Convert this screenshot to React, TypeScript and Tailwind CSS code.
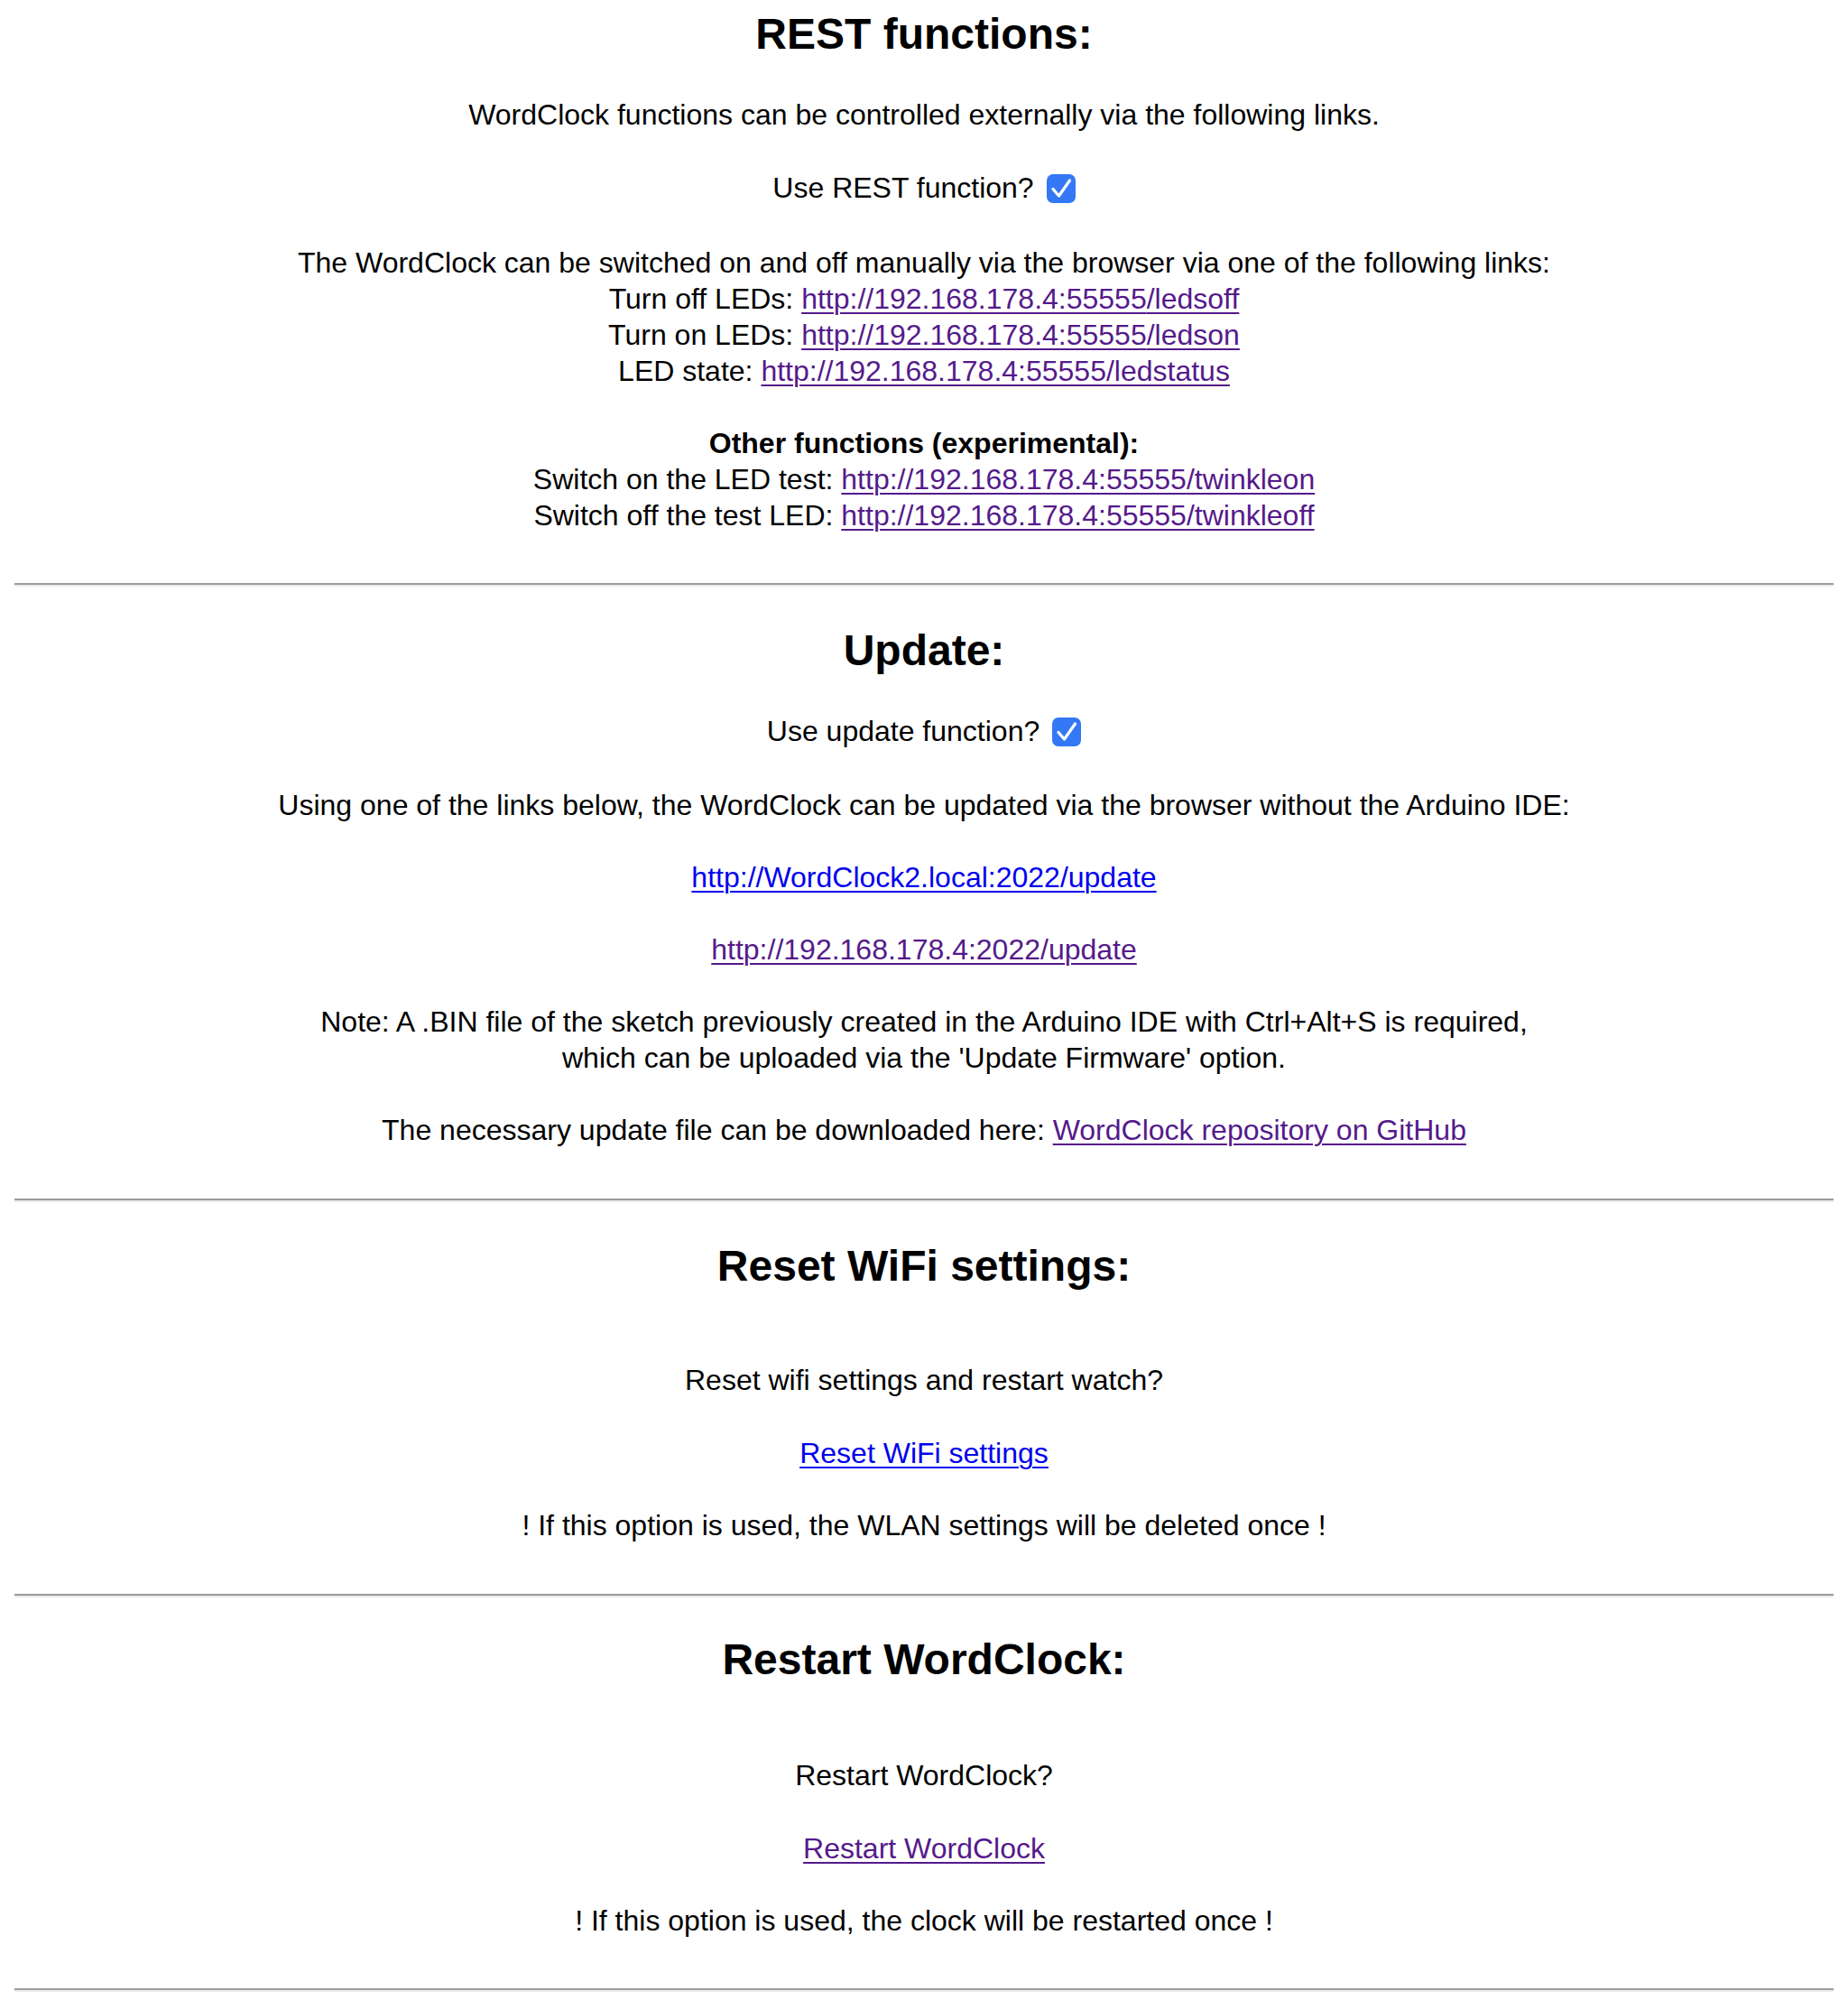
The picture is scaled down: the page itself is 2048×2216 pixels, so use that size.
const FONT = "font-['Liberation_Sans',Arial,Helvetica,sans-serif]";

function Line({ children, className = '' }: { children: React.ReactNode; className?: string }) {
  return <div className={`h-[40px] leading-[40px] whitespace-nowrap ${className}`}>{children}</div>;
}

function Heading({ children, className = '' }: { children: React.ReactNode; className?: string }) {
  return (
    <h2 className={`h-[56px] leading-[56px] text-[48px] font-bold whitespace-nowrap ${className}`}>{children}</h2>
  );
}

function Link({ href, fresh = false, children }: { href: string; fresh?: boolean; children: React.ReactNode }) {
  return (
    <a
      href={href}
      className={`underline decoration-2 underline-offset-[4px] ${fresh ? 'text-[#0000ee]' : 'text-[#551a8b]'}`}
    >
      {children}
    </a>
  );
}

function Checkbox() {
  return (
    <span className="inline-flex align-middle ml-[14px] -mt-[4px] h-[32px] w-[32px] items-center justify-center rounded-[7px] bg-[#3478f6]">
      <svg width="32" height="32" viewBox="0 0 32 32" fill="none">
        <path d="M7 16.5 L13.5 24 L25.5 7" stroke="white" strokeWidth="3.2" strokeLinecap="round" strokeLinejoin="round" />
      </svg>
    </span>
  );
}

function Rule({ className = '' }: { className?: string }) {
  return <div className={`border-t-[2.5px] border-b-2 border-t-[#9b9b9b] border-b-[#ececec] ${className}`} />;
}

const ip = 'http://192.168.178.4:55555';

export default function App() {
  return (
    <div className={`${FONT} bg-white text-black text-[32px] px-[16px] pt-[10px] pb-[12px] flex flex-col items-center text-center`}>
      {/* REST */}
      <Heading>REST functions:</Heading>
      <Line className="mt-[41px]">WordClock functions can be controlled externally via the following links.</Line>
      <Line className="mt-[41px]">
        Use REST function?
        <Checkbox />
      </Line>
      <Line className="mt-[43px]">The WordClock can be switched on and off manually via the browser via one of the following links:</Line>
      <Line>
        Turn off LEDs: <Link href={`${ip}/ledsoff`}>{ip}/ledsoff</Link>
      </Line>
      <Line>
        Turn on LEDs: <Link href={`${ip}/ledson`}>{ip}/ledson</Link>
      </Line>
      <Line>
        LED state: <Link href={`${ip}/ledstatus`}>{ip}/ledstatus</Link>
      </Line>
      <Line className="mt-[40px] font-bold">Other functions (experimental):</Line>
      <Line>
        Switch on the LED test: <Link href={`${ip}/twinkleon`}>{ip}/twinkleon</Link>
      </Line>
      <Line>
        Switch off the test LED: <Link href={`${ip}/twinkleoff`}>{ip}/twinkleoff</Link>
      </Line>

      <Rule className="mt-[55px] self-stretch" />

      {/* Update */}
      <Heading className="mt-[43px]">Update:</Heading>
      <Line className="mt-[41px]">
        Use update function?
        <Checkbox />
      </Line>
      <Line className="mt-[42px]">Using one of the links below, the WordClock can be updated via the browser without the Arduino IDE:</Line>
      <Line className="mt-[40px]">
        <Link href="http://WordClock2.local:2022/update" fresh>
          http://WordClock2.local:2022/update
        </Link>
      </Line>
      <Line className="mt-[40px]">
        <Link href="http://192.168.178.4:2022/update">http://192.168.178.4:2022/update</Link>
      </Line>
      <Line className="mt-[40px]">Note: A .BIN file of the sketch previously created in the Arduino IDE with Ctrl+Alt+S is required,</Line>
      <Line>which can be uploaded via the 'Update Firmware' option.</Line>
      <Line className="mt-[40px]">
        The necessary update file can be downloaded here:{' '}
        <Link href="https://github.com/AWSW-de/WordClock-16x16-LED-matrix-2023">WordClock repository on GitHub</Link>
      </Line>

      <Rule className="mt-[56px] self-stretch" />

      {/* Reset WiFi */}
      <Heading className="mt-[43px]">Reset WiFi settings:</Heading>
      <Line className="mt-[78px]">Reset wifi settings and restart watch?</Line>
      <Line className="mt-[41px]">
        <Link href="#resetwifi" fresh>
          Reset WiFi settings
        </Link>
      </Line>
      <Line className="mt-[40px]">! If this option is used, the WLAN settings will be deleted once !</Line>

      <Rule className="mt-[56px] self-stretch" />

      {/* Restart */}
      <Heading className="mt-[41px]">Restart WordClock:</Heading>
      <Line className="mt-[80px]">Restart WordClock?</Line>
      <Line className="mt-[41px]">
        <Link href="#restart">Restart WordClock</Link>
      </Line>
      <Line className="mt-[40px]">! If this option is used, the clock will be restarted once !</Line>

      <Rule className="mt-[55px] self-stretch" />
    </div>
  );
}
